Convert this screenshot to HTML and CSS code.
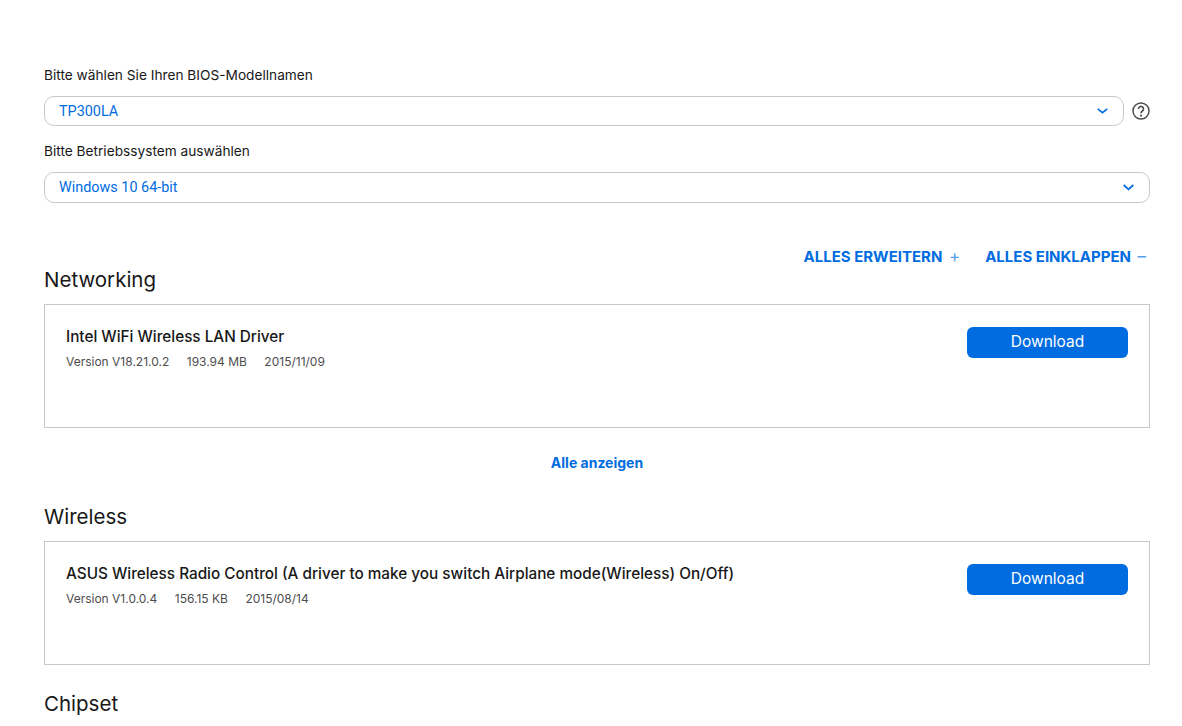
FILE: index.html
```html
<!DOCTYPE html>
<html lang="de">
<head>
<meta charset="utf-8">
<title>Treiber und Tools</title>
<link rel="stylesheet" href="styles.css">
</head>
<body>
<main class="page">
  <label class="field-label">Bitte wählen Sie Ihren BIOS-Modellnamen</label>
  <div class="select-row">
    <div class="select select-short">
      <span>TP300LA</span>
      <svg class="chev" width="11" height="6" viewBox="0 0 11 6"><path d="M.7 .8 5.5 4.6 10.3 .8" fill="none" stroke="#006ce0" stroke-width="1.7"/></svg>
    </div>
    <svg class="help" width="18" height="18" viewBox="0 0 18 18"><circle cx="9" cy="9" r="8" fill="none" stroke="#4d4d4d" stroke-width="1.5"/><path d="M6.5 7a2.5 2.5 0 1 1 3.9 2c-.9.6-1.4 1.1-1.4 2.2" fill="none" stroke="#4d4d4d" stroke-width="1.6"/><circle cx="9" cy="13.6" r="1.05" fill="#4d4d4d"/></svg>
  </div>
  <label class="field-label label-second">Bitte Betriebssystem auswählen</label>
  <div class="select select-full">
    <span>Windows 10 64-bit</span>
    <svg class="chev" width="11" height="7" viewBox="0 0 11 7"><path d="M.7 1 5.5 5.4 10.3 1" fill="none" stroke="#006ce0" stroke-width="1.7"/></svg>
  </div>

  <div class="actions">
    <a class="action">ALLES ERWEITERN<span class="sign">+</span></a>
    <a class="action">ALLES EINKLAPPEN<span class="sign">–</span></a>
  </div>

  <h2 class="group-title first">Networking</h2>
  <section class="card">
    <div class="card-info">
      <h3 class="card-title">Intel WiFi Wireless LAN Driver</h3>
      <p class="meta"><span>Version V18.21.0.2</span><span>193.94 MB</span><span>2015/11/09</span></p>
    </div>
    <button class="download">Download</button>
  </section>
  <a class="show-all">Alle anzeigen</a>

  <h2 class="group-title">Wireless</h2>
  <section class="card">
    <div class="card-info">
      <h3 class="card-title">ASUS Wireless Radio Control (A driver to make you switch Airplane mode(Wireless) On/Off)</h3>
      <p class="meta"><span>Version V1.0.0.4</span><span>156.15 KB</span><span>2015/08/14</span></p>
    </div>
    <button class="download">Download</button>
  </section>

  <h2 class="group-title third">Chipset</h2>
</main>
</body>
</html>
```
FILE: styles.css
```css
* { box-sizing: border-box; }
html, body { margin: 0; height: 726px; overflow: hidden; background: #fff; }
body { font-family: Inter, "Liberation Sans", sans-serif; color: #181818; }
.page { width: 1106px; margin-left: 44px; padding-top: 67px; display: flex; flex-direction: column; }
.field-label { display: block; font-size: 13.7px; line-height: 17px; color: #181818; }
.label-second { margin-top: 17px; }
.select-row { display: flex; align-items: center; justify-content: space-between; margin-top: 12px; }
.select { display: flex; align-items: center; justify-content: space-between; border: 1px solid #c8c8c8; border-radius: 10px; padding: 0 15px 0 14px; font-family: Roboto, sans-serif; font-size: 14.4px; color: #006ce0; background: #fff; }
.select-short { width: 1080px; height: 30px; }
.select-full { width: 1106px; height: 31px; margin-top: 12px; }
.help { flex: none; }
.actions { display: flex; justify-content: flex-end; gap: 25px; margin-top: 45px; padding-right: 4px; height: 17px; }
.action { font-size: 15px; line-height: 17px; font-weight: 700; color: #006ce0; }
.sign { font-size: 17px; font-weight: 400; margin-left: 6.5px; color: #5a9fea; }
.group-title { margin: 0; font-size: 20.5px; line-height: 26px; font-weight: 400; color: #181818; }
.group-title.first { margin-top: 2px; }
.group-title.third { margin-top: 26px; }
.card { margin-top: 11px; height: 124px; border: 1px solid #c8c8c8; padding: 22px 21px 0; display: flex; justify-content: space-between; align-items: flex-start; }
.card-title { margin: 1px 0 0; font-size: 15.3px; line-height: 18px; font-weight: 500; color: #181818; }
.meta { margin: 8px 0 0; display: flex; gap: 17.5px; font-size: 12px; line-height: 16px; color: #4d4d4d; }
.download { width: 161px; height: 31px; border: 0; border-radius: 6px; background: #006ce0; color: #fff; font-family: inherit; font-size: 15.5px; padding: 0 0 2px; }
.show-all { align-self: center; margin: 26px 0 33px; font-size: 14px; line-height: 17px; font-weight: 700; color: #006ce0; }
```
